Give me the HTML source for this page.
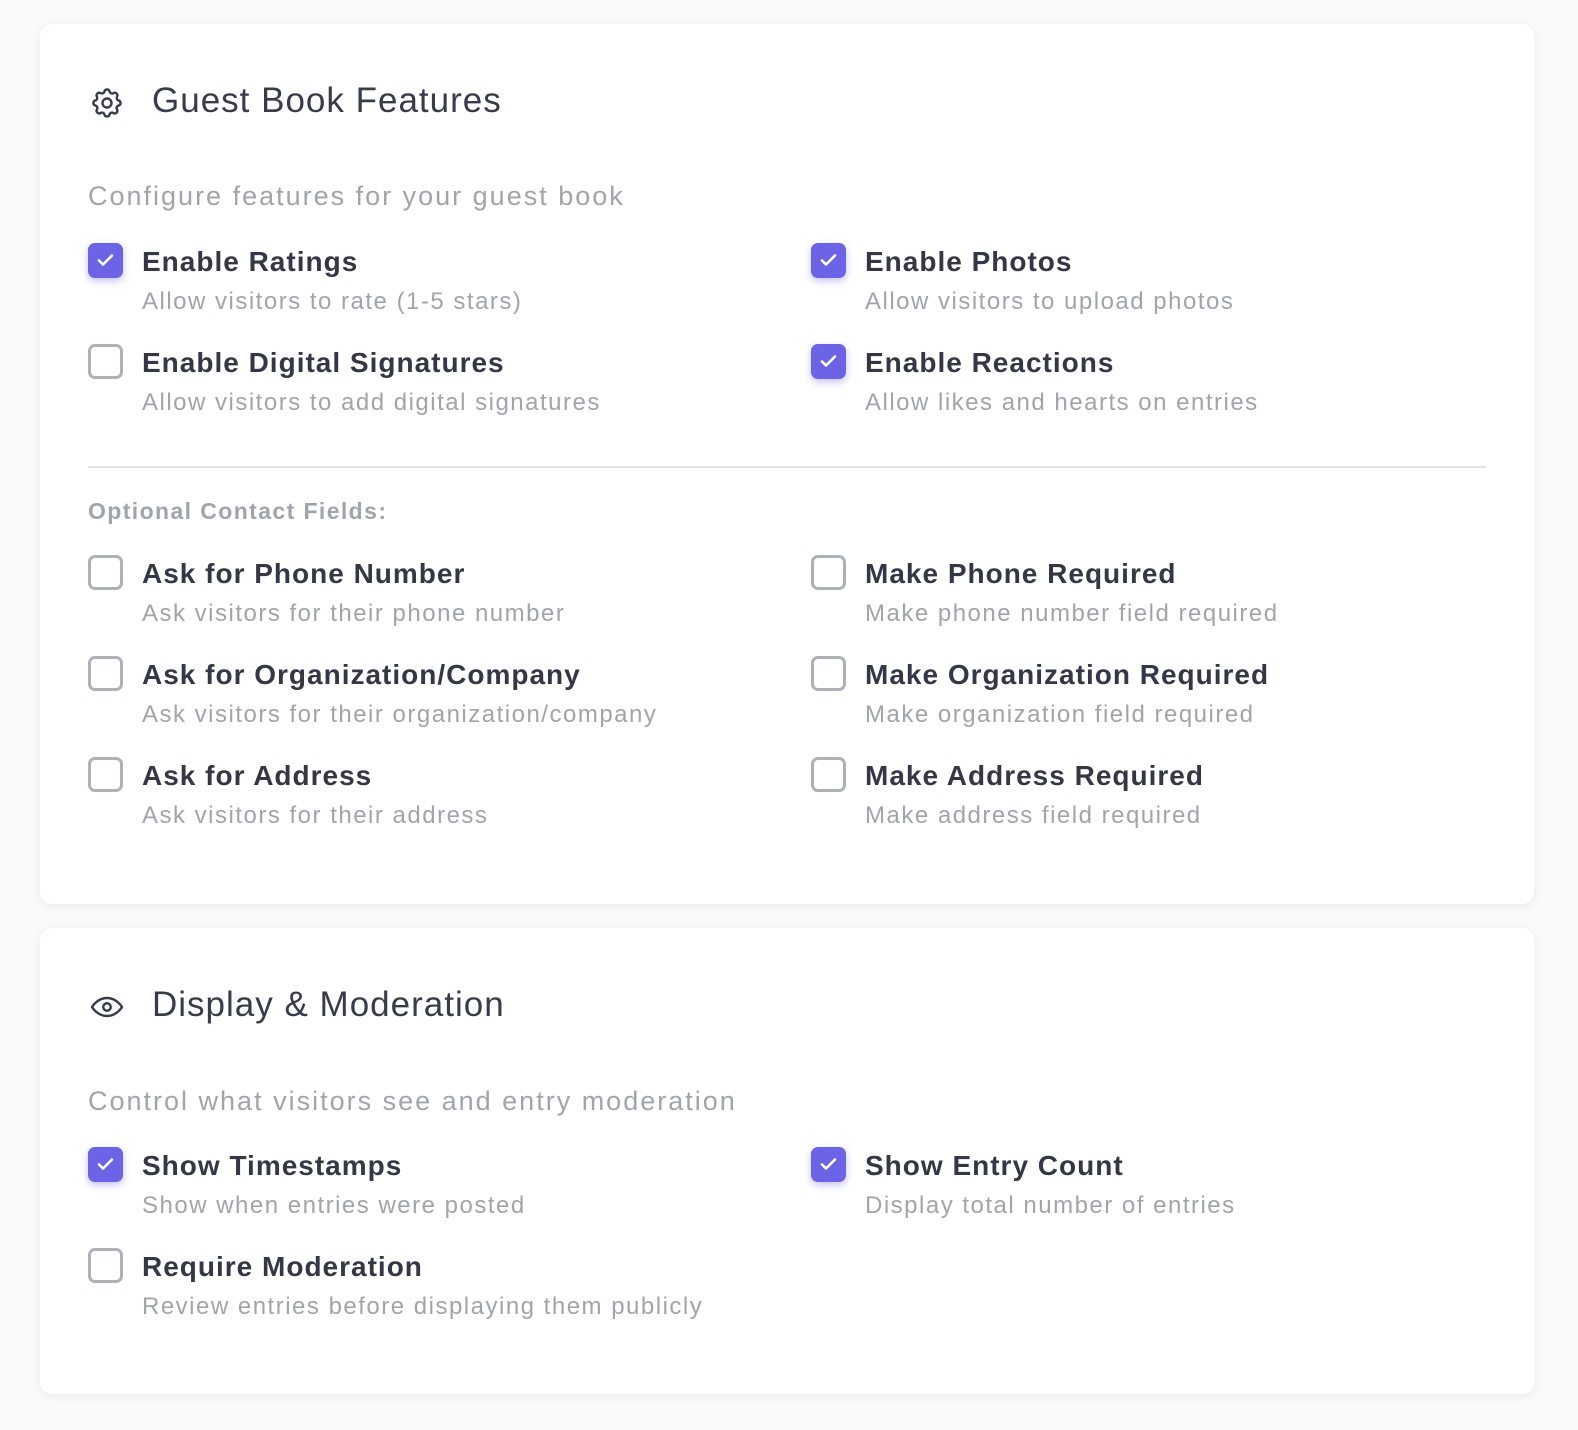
<!DOCTYPE html>
<html><head><style>
*{margin:0;padding:0;box-sizing:border-box}
body{width:1578px;height:1430px;background:#fafafa;font-family:"Liberation Sans",sans-serif;position:relative;overflow:hidden}
.card{position:absolute;left:40px;width:1494px;background:#fff;border-radius:12px;box-shadow:0 2px 10px rgba(0,0,0,0.07)}
.abs{position:absolute;white-space:nowrap}
.title{font-size:35px;color:#3a3a4a;line-height:40px;letter-spacing:1px}
.sub{font-size:27px;color:#a3a3ab;line-height:32px;letter-spacing:2px}
.lab{font-size:28px;font-weight:bold;color:#363646;line-height:32px;letter-spacing:1px}
.desc{font-size:24px;color:#a3a3ab;line-height:28px;letter-spacing:1.5px}
.cb{position:absolute;width:35px;height:35px;border-radius:7px;border:3px solid #b0b0b8;background:#fff}
.cb.on{border:none;background:#6c63e6;box-shadow:0 3px 8px rgba(108,99,230,0.4)}
.cb.on svg{position:absolute;left:9px;top:10px}
.sec{font-size:23px;font-weight:bold;color:#a3a3ab;letter-spacing:1.4px}
</style></head><body>
<div class="card" style="top:24px;height:880px"></div>
<div class="card" style="top:928px;height:466px"></div>

<svg class="abs" style="left:89px;top:85px" width="36" height="36" viewBox="0 0 24 24" fill="none" stroke="#3a3a4a" stroke-width="1.6" stroke-linecap="round" stroke-linejoin="round"><path d="M10.3 4.3c.4-1.8 3-1.8 3.4 0a1.7 1.7 0 0 0 2.6 1.1c1.5-.9 3.300.8 2.4 2.4a1.7 1.7 0 0 0 1 2.5c1.8.4 1.8 3 0 3.4a1.7 1.7 0 0 0-1 2.6c.9 1.5-.9 3.3-2.4 2.4a1.7 1.7 0 0 0-2.6 1c-.4 1.8-3 1.8-3.4 0a1.7 1.7 0 0 0-2.6-1c-1.5.9-3.3-.9-2.4-2.4a1.7 1.7 0 0 0-1-2.6c-1.8-.4-1.8-3 0-3.4a1.7 1.7 0 0 0 1-2.5c-.9-1.6.9-3.3 2.4-2.4 1 .6 2.3.1 2.6-1.1z"/><circle cx="12" cy="12" r="3"/></svg>
<div class="abs title" style="left:152px;top:81px">Guest Book Features</div>
<div class="abs sub" style="left:88px;top:180px">Configure features for your guest book</div>

<svg class="abs" style="left:89px;top:989px" width="36" height="36" viewBox="0 0 24 24" fill="none" stroke="#3a3a4a" stroke-width="1.6" stroke-linecap="round" stroke-linejoin="round"><path d="M2 12s3.5-6 10-6 10 6 10 6-3.5 6-10 6S2 12 2 12z"/><circle cx="12" cy="12" r="2.5"/></svg>
<div class="abs title" style="left:152px;top:985px">Display &amp; Moderation</div>
<div class="abs sub" style="left:88px;top:1085px">Control what visitors see and entry moderation</div>

<div class="abs" style="left:88px;top:466px;width:1398px;height:2px;background:#e4e4e8"></div>
<div class="abs sec" style="left:88px;top:498px">Optional Contact Fields:</div>

<div id="items"></div>
<script>
const ck='<svg width="17" height="14" viewBox="0 0 17 14"><path d="M2 7.5l4 4 9-9" stroke="#fff" stroke-width="2.6" fill="none" stroke-linecap="round" stroke-linejoin="round"/></svg>';
const items=[
[88,243,1,"Enable Ratings","Allow visitors to rate (1-5 stars)"],
[811,243,1,"Enable Photos","Allow visitors to upload photos"],
[88,344,0,"Enable Digital Signatures","Allow visitors to add digital signatures"],
[811,344,1,"Enable Reactions","Allow likes and hearts on entries"],
[88,555,0,"Ask for Phone Number","Ask visitors for their phone number"],
[811,555,0,"Make Phone Required","Make phone number field required"],
[88,656,0,"Ask for Organization/Company","Ask visitors for their organization/company"],
[811,656,0,"Make Organization Required","Make organization field required"],
[88,757,0,"Ask for Address","Ask visitors for their address"],
[811,757,0,"Make Address Required","Make address field required"],
[88,1147,1,"Show Timestamps","Show when entries were posted"],
[811,1147,1,"Show Entry Count","Display total number of entries"],
[88,1248,0,"Require Moderation","Review entries before displaying them publicly"]];
let h='';
for(const [x,y,on,l,d] of items){
h+=`<div class="cb${on?' on':''}" style="left:${x}px;top:${y}px">${on?ck:''}</div>`;
h+=`<div class="abs lab" style="left:${x+54}px;top:${y+3}px">${l}</div>`;
h+=`<div class="abs desc" style="left:${x+54}px;top:${y+45}px">${d}</div>`;
}
document.getElementById('items').innerHTML=h;
</script>
</body></html>
